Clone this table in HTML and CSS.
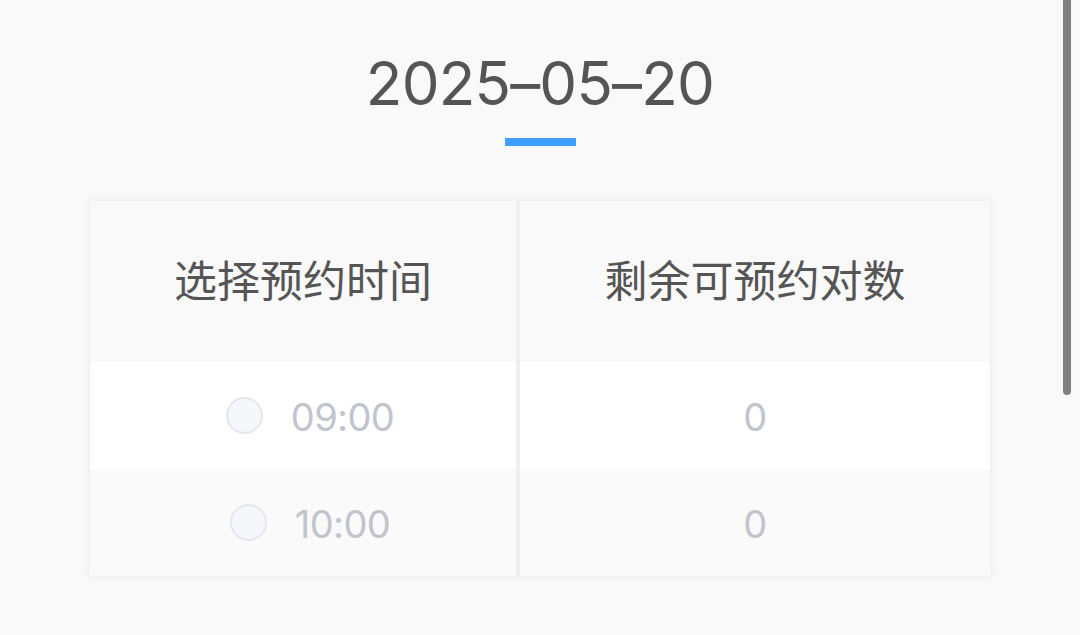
FILE: index.html
```html
<!DOCTYPE html>
<html lang="zh-CN">
<head>
<meta charset="utf-8">
<link rel="stylesheet" href="styles.css">
</head>
<body>
<div class="page">
  <div class="date">2025–05–20</div>
  <div class="underline"></div>
  <div class="card">
    <div class="row head">
      <div class="cell left">选择预约时间</div>
      <div class="cell right">剩余可预约对数</div>
    </div>
    <div class="row odd">
      <div class="cell left"><span class="radio"></span><span class="time">09:00</span></div>
      <div class="cell right num">0</div>
    </div>
    <div class="row even">
      <div class="cell left"><span class="radio"></span><span class="time">10:00</span></div>
      <div class="cell right num">0</div>
    </div>
  </div>
</div>
<div class="scrollbar"></div>
</body>
</html>
```
FILE: styles.css
```css
html, body {
  margin: 0;
  padding: 0;
  background: #f9f9f9;
  height: 100%;
  overflow: hidden;
}
.page {
  display: flex;
  flex-direction: column;
  align-items: center;
  padding-top: 46px;
  font-family: Inter, "Noto Sans CJK SC", sans-serif;
}
.date {
  font-size: 60px;
  line-height: 74px;
  color: #555555;
  letter-spacing: -0.8px;
}
.underline {
  width: 71px;
  height: 8px;
  background: #409eff;
  margin-top: 18px;
}
.card {
  margin-top: 55px;
  width: 900px;
  background: #fafafa;
  box-shadow: 0 0 10px rgba(0, 0, 0, 0.07);
}
.row {
  display: flex;
}
.cell {
  display: flex;
  align-items: center;
  justify-content: center;
  box-sizing: border-box;
}
.cell.left {
  width: 430px;
  border-right: 4px solid #efefef;
}
.cell.right {
  flex: 1;
}
.head .cell {
  height: 161px;
  padding-bottom: 8px;
  background: #f9f9f9;
  font-family: "Noto Sans CJK SC", sans-serif;
  font-size: 43px;
  color: #555555;
}
.odd .cell {
  height: 107px;
  background: #ffffff;
}
.even .cell {
  height: 107px;
  background: #fafafa;
}
.odd .cell.left, .even .cell.left {
  padding-left: 14px;
}
.radio {
  width: 33px;
  height: 33px;
  border-radius: 50%;
  border: 2px solid #e4e7ed;
  background: #f5f7fa;
  margin-right: 28px;
}
.time, .num {
  font-size: 38px;
  letter-spacing: -0.6px;
  color: #c0c4cc;
  padding-top: 3px;
}
.scrollbar {
  position: absolute;
  top: 0;
  left: 1063px;
  width: 8px;
  height: 395px;
  background: #808080;
  border-radius: 0 0 4px 4px;
}
```
